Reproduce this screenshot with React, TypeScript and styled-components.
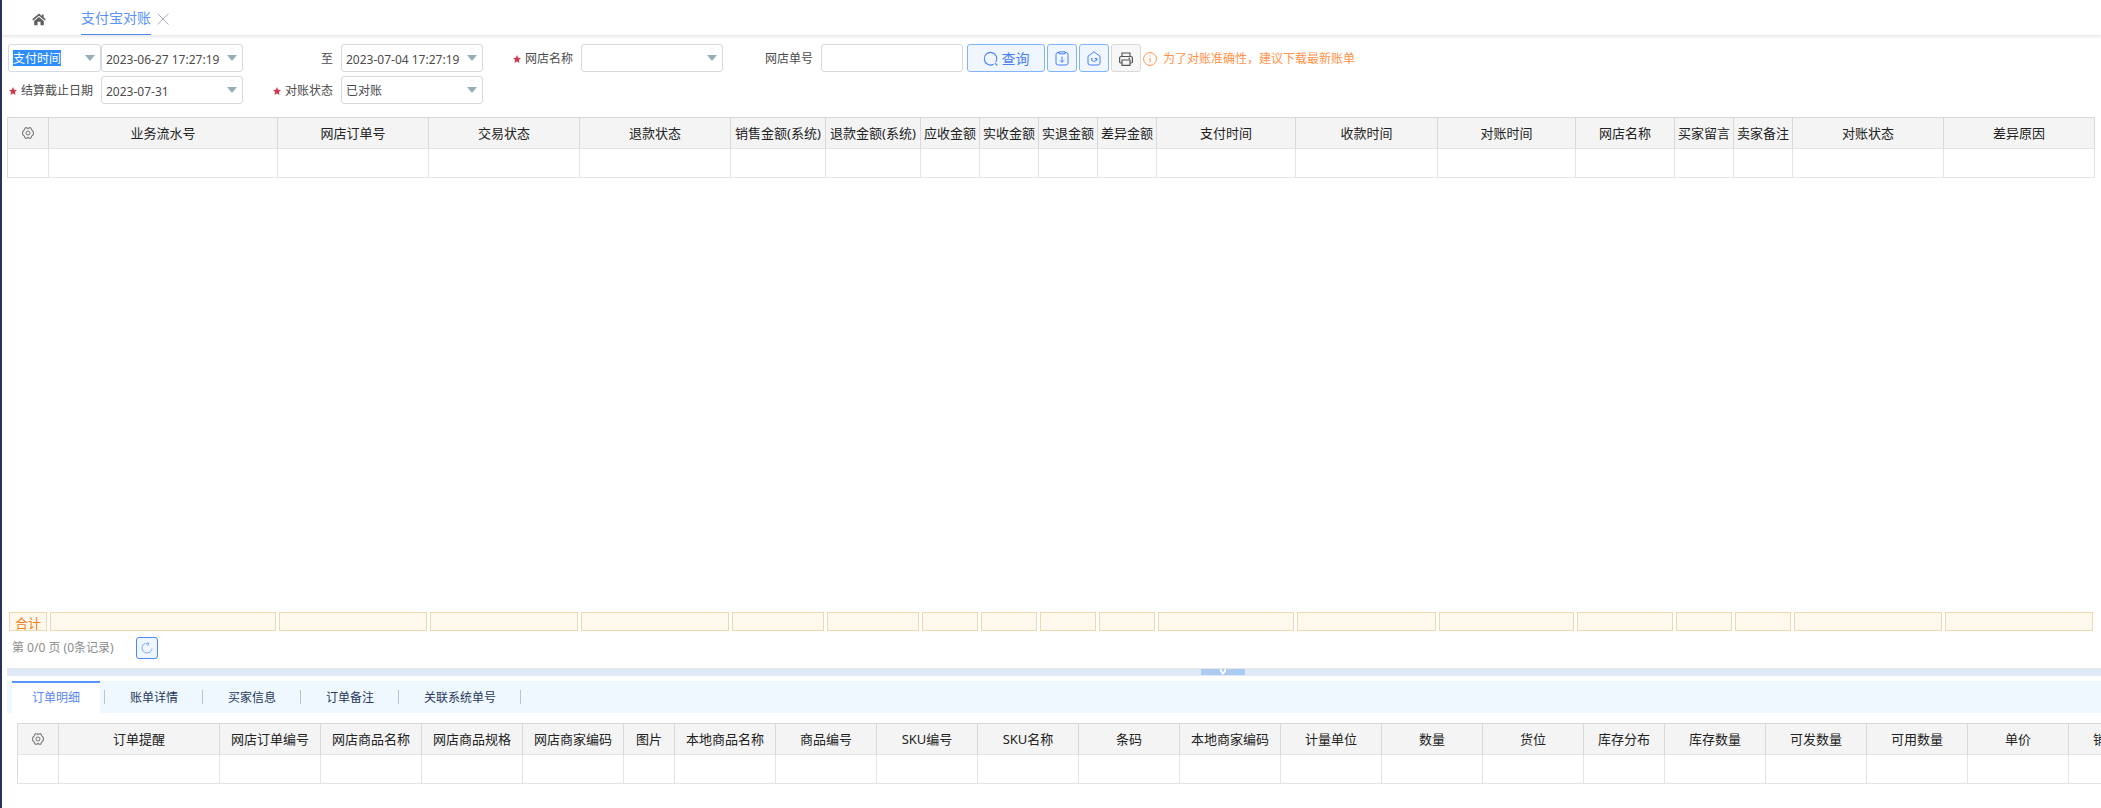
import React from "react";
import styled, { createGlobalStyle, css } from "styled-components";

const GlobalStyle = createGlobalStyle`
  * { box-sizing: border-box; }
  body {
    margin: 0;
    background: #fff;
    color: #4c4c4c;
    font: 12px/16px "Noto Sans", "Noto Sans CJK SC", sans-serif;
  }
  button, input, select { font: inherit; color: inherit; margin: 0; }
`;

type Column = { label: string; width: number };

const billColumns: Column[] = [
  { label: "业务流水号", width: 229 },
  { label: "网店订单号", width: 151 },
  { label: "交易状态", width: 151 },
  { label: "退款状态", width: 151 },
  { label: "销售金额(系统)", width: 95 },
  { label: "退款金额(系统)", width: 95 },
  { label: "应收金额", width: 59 },
  { label: "实收金额", width: 59 },
  { label: "实退金额", width: 59 },
  { label: "差异金额", width: 59 },
  { label: "支付时间", width: 139 },
  { label: "收款时间", width: 142 },
  { label: "对账时间", width: 138 },
  { label: "网店名称", width: 99 },
  { label: "买家留言", width: 59 },
  { label: "卖家备注", width: 59 },
  { label: "对账状态", width: 151 },
  { label: "差异原因", width: 151 },
];

const detailColumns: Column[] = [
  { label: "订单提醒", width: 161 },
  { label: "网店订单编号", width: 101 },
  { label: "网店商品名称", width: 101 },
  { label: "网店商品规格", width: 101 },
  { label: "网店商家编码", width: 101 },
  { label: "图片", width: 51 },
  { label: "本地商品名称", width: 101 },
  { label: "商品编号", width: 101 },
  { label: "SKU编号", width: 101 },
  { label: "SKU名称", width: 101 },
  { label: "条码", width: 101 },
  { label: "本地商家编码", width: 101 },
  { label: "计量单位", width: 101 },
  { label: "数量", width: 101 },
  { label: "货位", width: 101 },
  { label: "库存分布", width: 81 },
  { label: "库存数量", width: 101 },
  { label: "可发数量", width: 101 },
  { label: "可用数量", width: 101 },
  { label: "单价", width: 101 },
  { label: "销售金额", width: 101 },
];

const SETTINGS_WIDTH = 41;

const Page = styled.div`
  display: flex;
  flex-direction: column;
  min-height: 100vh;
  border-left: 2px solid #29325a;
  overflow-x: hidden;
`;

const TopBar = styled.nav`
  display: flex;
  height: 35px;
  padding-left: 30px;
  box-shadow: 0 1px 4px rgba(0, 0, 0, 0.14);
`;

const HomeLink = styled.a`
  display: flex;
  align-items: center;
  margin-right: 35px;
  padding-top: 3px;
  color: #5f5f5f;
`;

const PageTab = styled.a`
  padding: 8px 0 6px;
  border-bottom: 1px solid #4d8af5;
  color: #5b92fb;
  font-size: 14px;
  line-height: 20px;
  text-decoration: none;
`;

const CloseButton = styled.button`
  display: flex;
  align-items: center;
  margin-left: 6px;
  padding: 3px 0 0;
  border: 0;
  background: none;
  color: #a9b0c0;
`;

const Filters = styled.form`
  display: grid;
  grid-template-columns: 93px 142px 98px 142px 98px 142px 98px 142px auto;
  justify-content: start;
  gap: 4px 0;
  padding: 9px 6px 13px;
`;

const Label = styled.label`
  display: flex;
  align-items: center;
  justify-content: flex-end;
  gap: 4px;
  padding: 2px 8px 0 0;
  white-space: nowrap;
`;

const Field = styled.div`
  position: relative;
  display: grid;
`;

const boxStyle = css`
  width: 100%;
  height: 28px;
  padding: 2px 4px 0;
  border: 1px solid #d5dadf;
  border-radius: 3px;
  background: #fff;
  outline: none;
`;

const TextInput = styled.input`
  ${boxStyle}
`;

const Select = styled.select<{ $marked?: boolean }>`
  ${boxStyle}
  appearance: none;
  ${(p) =>
    p.$marked &&
    css`
      color: #fff;
      background: linear-gradient(#2f8dfb, #2f8dfb) 4px 5px / 48px 16px no-repeat;
    `}
`;

const ArrowMark = styled.svg`
  position: absolute;
  top: 11px;
  right: 6px;
  pointer-events: none;
`;

const Actions = styled.div`
  display: flex;
  align-items: center;
  gap: 2px;
  padding-left: 4px;
`;

const ActionButton = styled.button<{ $wide?: boolean; $plain?: boolean }>`
  display: flex;
  align-items: center;
  justify-content: center;
  gap: 3px;
  width: ${(p) => (p.$wide ? 78 : 30)}px;
  height: 28px;
  padding: 1px 0 0;
  border: 1px solid ${(p) => (p.$plain ? "#d9d9d9" : "#82b4fa")};
  border-radius: 3px;
  background: ${(p) => (p.$plain ? "#f7f7f7" : "#eff6ff")};
  color: ${(p) => (p.$plain ? "#555" : "#4a80f5")};
  font-size: 14px;
`;

const Notice = styled.p`
  display: flex;
  align-items: center;
  gap: 6px;
  margin: 0;
  padding-top: 1px;
  color: #ff9248;
  white-space: nowrap;
`;

const GridArea = styled.section`
  flex: 1;
  min-height: 200px;
  padding: 0 6px 0 5px;
`;

const DataTable = styled.table<{ $min: number }>`
  width: 100%;
  min-width: ${(p) => p.$min}px;
  table-layout: fixed;
  border-spacing: 0;
  border-left: 1px solid #dcdce0;
  color: #222;
  font-size: 13px;

  th, td {
    padding: 0;
    border-right: 1px solid #e4e4e8;
    border-bottom: 1px solid #e4e4e8;
  }
  th {
    height: 32px;
    border-top: 1px solid #d8d8dc;
    border-right-color: #d8d8dc;
    background: #f4f4f4;
    font-weight: 400;
    white-space: nowrap;
  }
  td { height: 29px; }
`;

const SettingsButton = styled.button`
  display: block;
  margin: 0 auto;
  padding: 0;
  border: 0;
  background: none;
  color: #757575;
  line-height: 0;
`;

const Totals = styled.div<{ $columns: string }>`
  display: grid;
  grid-template-columns: ${(p) => p.$columns};
  gap: 3px;
  padding: 0 8px 0 7px;
`;

const TotalCell = styled.div`
  height: 19px;
  border: 1px solid #ecd9b0;
  background: #fff8ec;
  color: #ef7d1a;
  font-size: 13px;
  line-height: 20px;
  text-align: center;
`;

const Pager = styled.div`
  display: flex;
  align-items: center;
  gap: 18px;
  padding: 6px 0 9px 10px;
  color: #8c8c8c;
`;

const PageInfo = styled.span`
  min-width: 106px;
`;

const RefreshButton = styled.button`
  display: flex;
  align-items: center;
  justify-content: center;
  width: 22px;
  height: 22px;
  padding: 0;
  border: 1px solid #4d8af5;
  border-radius: 3px;
  background: #eff6ff;
  color: #7fa6f5;
`;

const Splitter = styled.div`
  height: 8px;
  margin-left: 5px;
  border-top: 1px solid #e6e6e6;
  background: #e0eaf6;
`;

const CollapseButton = styled.button`
  display: flex;
  justify-content: center;
  width: 44px;
  height: 6px;
  margin-left: 57%;
  padding: 0;
  border: 0;
  background: #accbf2;
`;

const Details = styled.section`
  padding: 5px 0 24px 5px;
`;

const TabList = styled.div`
  display: flex;
  height: 32px;
  padding-left: 5px;
  background: #eff7ff;
`;

const TabItem = styled.div`
  display: flex;
  align-items: center;

  &::after {
    content: "";
    width: 1px;
    height: 14px;
    margin: 0 5px 0 4px;
    background: #b4c4da;
  }
`;

const Tab = styled.button<{ $active?: boolean }>`
  height: 32px;
  padding: 0 20px;
  border: 0;
  border-top: 2px solid ${(p) => (p.$active ? "#5596fa" : "transparent")};
  background: ${(p) => (p.$active ? "#fff" : "transparent")};
  color: ${(p) => (p.$active ? "#5a86f5" : "#27395c")};
`;

const DetailGrid = styled.div`
  overflow: hidden;
  padding: 10px 0 0 10px;
`;

const Arrow = () => (
  <ArrowMark width="10" height="6" viewBox="0 0 10 6" aria-hidden="true">
    <path d="M0 0h10L5 6z" fill="#94afb8" />
  </ArrowMark>
);

const RequiredStar = () => (
  <svg width="8" height="8" viewBox="0 0 24 24" aria-hidden="true">
    <path d="M12 0l3.6 8.2 8.4.9-6.300 5.900L19.500 24 12 19.200 4.500 24l1.800-9L0 9.100l8.400-.9z" fill="#d23c50" />
  </svg>
);

const SettingsIcon = () => (
  <svg width="12" height="12" viewBox="0 0 12 12" fill="none" stroke="currentColor">
    <path d="M3.300 .8h1.500l1.200.7 1.200-.7h1.500l.9 2 1.700 1.700v3L9.600 9.200l-.9 2H7.200L6 10.500l-1.200.7H3.300l-.9-2L.7 7.500v-3l1.700-1.700z" strokeWidth="1.100" />
    <circle cx="6" cy="6" r="2" />
  </svg>
);

function Grid({ columns, name }: { columns: Column[]; name: string }) {
  const last = columns.length - 1;
  const total = columns.reduce((sum, c) => sum + c.width, SETTINGS_WIDTH + 1);
  return (
    <DataTable $min={total} aria-label={name}>
      <colgroup>
        <col width={SETTINGS_WIDTH} />
        {columns.map((c, i) => (
          <col key={c.label} width={i === last ? undefined : c.width} />
        ))}
      </colgroup>
      <thead>
        <tr>
          <th>
            <SettingsButton type="button" aria-label="列设置">
              <SettingsIcon />
            </SettingsButton>
          </th>
          {columns.map((c) => (
            <th key={c.label} scope="col">{c.label}</th>
          ))}
        </tr>
      </thead>
      <tbody>
        <tr>
          <td />
          {columns.map((c) => (
            <td key={c.label} />
          ))}
        </tr>
      </tbody>
    </DataTable>
  );
}

const totalTracks = [SETTINGS_WIDTH, ...billColumns.map((c) => c.width)]
  .map((w, i, all) => (i === all.length - 1 ? `minmax(${w - 3}px, 1fr)` : `${w - 3}px`))
  .join(" ");

const detailTabs = ["订单明细", "账单详情", "买家信息", "订单备注", "关联系统单号"];

export default function App() {
  return (
    <>
      <GlobalStyle />
      <Page>
        <TopBar>
          <HomeLink href="#home" aria-label="首页">
            <svg width="14" height="13" viewBox="0 0 14 13">
              <path d="M.8 6.900L7 1.700l6.200 5.200M10.800 1.500v3" fill="none" stroke="currentColor" strokeWidth="1.700" />
              <path d="M2.200 8L7 4l4.800 4v4.300H8.500V8.800h-3v3.500H2.200z" fill="currentColor" />
            </svg>
          </HomeLink>
          <PageTab href="#alipay">支付宝对账</PageTab>
          <CloseButton type="button" aria-label="关闭">
            <svg width="12" height="12" viewBox="0 0 12 12">
              <path d="M.5 .5l11 11M11.500 .5l-11 11" stroke="currentColor" />
            </svg>
          </CloseButton>
        </TopBar>

        <Filters onSubmit={(e) => e.preventDefault()}>
          <Field>
            <Select $marked aria-label="时间类型"><option>支付时间</option></Select>
            <Arrow />
          </Field>
          <Field>
            <TextInput aria-label="开始时间" defaultValue="2023-06-27 17:27:19" />
            <Arrow />
          </Field>
          <Label htmlFor="end">至</Label>
          <Field>
            <TextInput id="end" defaultValue="2023-07-04 17:27:19" />
            <Arrow />
          </Field>
          <Label htmlFor="shop"><RequiredStar />网店名称</Label>
          <Field>
            <Select id="shop"><option></option></Select>
            <Arrow />
          </Field>
          <Label htmlFor="orderNo">网店单号</Label>
          <Field>
            <TextInput id="orderNo" />
          </Field>
          <Actions>
            <ActionButton $wide type="submit">
              <svg width="16" height="16" viewBox="0 0 16 16" fill="none" stroke="currentColor" strokeWidth="1.100">
                <path d="M10.500 13.300A6.300 6.300 0 1 1 12.800 11.200" />
                <path d="M11.800 12.200l2.400 2.300" />
              </svg>
              查询
            </ActionButton>
            <ActionButton type="button" aria-label="下载账单">
              <svg width="14" height="15" viewBox="0 0 14 15" fill="none" stroke="currentColor">
                <path d="M4 1.500H3a2 2 0 0 0-2 2v8.500a2 2 0 0 0 2 2h8a2 2 0 0 0 2-2V3.500a2 2 0 0 0-2-2h-1" />
                <path d="M4 .8h6v2H4zM7 5.500v5.500M5 9.300l2 2 2-2" />
              </svg>
            </ActionButton>
            <ActionButton type="button" aria-label="重新对账">
              <svg width="14" height="15" viewBox="0 0 14 15" fill="none" stroke="currentColor">
                <path d="M1 5.300L7 .8l6 4.500v6.700a2 2 0 0 1-2 2H3a2 2 0 0 1-2-2z" />
                <path d="M4.600 7.200a2.500 2.500 0 1 0 4.900.8M7.700 7.500h2.200v2M5.500 7.500H4.300" />
              </svg>
            </ActionButton>
            <ActionButton $plain type="button" aria-label="打印">
              <svg width="14" height="14" viewBox="0 0 14 14" fill="none" stroke="currentColor" strokeWidth="1.200">
                <path d="M3 4.500V1h8v3.500M3 11H1.800A1.200 1.200 0 0 1 .6 9.800V6a1.500 1.500 0 0 1 1.500-1.500h9.800A1.500 1.500 0 0 1 13.400 6v3.800a1.200 1.200 0 0 1-1.200 1.200H11" />
                <path d="M3 8h8v5.400H3zM9.500 6.300h1.500" />
              </svg>
            </ActionButton>
            <Notice>
              <svg width="14" height="14" viewBox="0 0 14 14" fill="none" stroke="currentColor">
                <circle cx="7" cy="7" r="6.400" />
                <path d="M7 3.300v1.300M7 6v4.500" />
              </svg>
              为了对账准确性，建议下载最新账单
            </Notice>
          </Actions>

          <Label htmlFor="deadline"><RequiredStar />结算截止日期</Label>
          <Field>
            <TextInput id="deadline" defaultValue="2023-07-31" />
            <Arrow />
          </Field>
          <Label htmlFor="status"><RequiredStar />对账状态</Label>
          <Field>
            <Select id="status"><option>已对账</option></Select>
            <Arrow />
          </Field>
        </Filters>

        <GridArea>
          <Grid columns={billColumns} name="对账记录" />
        </GridArea>

        <Totals $columns={totalTracks}>
          <TotalCell>合计</TotalCell>
          {billColumns.map((c) => (
            <TotalCell key={c.label} />
          ))}
        </Totals>

        <Pager>
          <PageInfo>第 0/0 页 (0条记录)</PageInfo>
          <RefreshButton type="button" aria-label="刷新">
            <svg width="12" height="12" viewBox="0 0 12 12" fill="none" stroke="currentColor">
              <path d="M4 1.400A5 5 0 1 0 11 6.500" />
              <path d="M4.500 1.800h3.300M6 .3l2 1.500-1.300 2" />
            </svg>
          </RefreshButton>
        </Pager>

        <Splitter>
          <CollapseButton type="button" aria-label="收起">
            <svg width="6" height="6" viewBox="0 0 6 6" fill="none" stroke="#fff" strokeWidth="1.800">
              <path d="M.7 0v1.700L3 4.500l2.300-2.800V0" />
            </svg>
          </CollapseButton>
        </Splitter>

        <Details>
          <TabList role="tablist">
            {detailTabs.map((t, i) => (
              <TabItem key={t} role="presentation">
                <Tab type="button" role="tab" aria-selected={i === 0} $active={i === 0}>{t}</Tab>
              </TabItem>
            ))}
          </TabList>
          <DetailGrid>
            <Grid columns={detailColumns} name="订单明细" />
          </DetailGrid>
        </Details>
      </Page>
    </>
  );
}
